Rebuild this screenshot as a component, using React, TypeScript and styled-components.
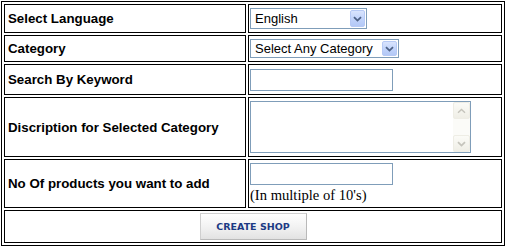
import React from "react";
import styled, { createGlobalStyle } from "styled-components";

const Global = createGlobalStyle`
  html, body { margin: 0; padding: 0; background: #fff; }
  body { margin: 1px; font-family: "Liberation Sans", Arial, sans-serif; color: #000; }
`;

const FormTable = styled.div`
  display: grid;
  grid-template-columns: 242px 254px;
  grid-template-rows: 29px 27px 31px 60px 49px 33px;
  gap: 2px;
  padding: 2px;
  border: 1px solid #000;
  width: fit-content;
`;

const Cell = styled.div<{ $span?: boolean }>`
  box-sizing: border-box;
  border: 1px solid #000;
  display: flex;
  align-items: center;
  grid-column: ${(p) => (p.$span ? "1 / span 2" : "auto")};
  justify-content: ${(p) => (p.$span ? "center" : "flex-start")};
`;

const LabelCell = styled(Cell)`
  padding: 0 3px;
  font-weight: bold;
  font-size: 13.3px;
`;

const FieldCell = styled(Cell)<{ $stack?: boolean }>`
  padding: 0 1px;
  flex-direction: ${(p) => (p.$stack ? "column" : "row")};
  align-items: ${(p) => (p.$stack ? "flex-start" : "center")};
  justify-content: ${(p) => (p.$stack ? "center" : "flex-start")};
`;

const SelectBox = styled.div<{ $w: number; $h: number }>`
  box-sizing: border-box;
  width: ${(p) => p.$w}px;
  height: ${(p) => p.$h}px;
  border: 1px solid #7f9db9;
  display: flex;
  align-items: stretch;
  padding: 1px;
  font-size: 13px;
`;

const SelectValue = styled.span`
  flex: 1;
  display: flex;
  align-items: center;
  padding-left: 3px;
  white-space: nowrap;
  overflow: hidden;
`;

const ArrowButton = styled.span`
  box-sizing: border-box;
  width: 15px;
  display: flex;
  align-items: center;
  justify-content: center;
  border: 1px solid #b6c9f5;
  border-radius: 2px;
  background: linear-gradient(180deg, #d9e4fd 0%, #c2d4fb 50%, #b3c8f6 100%);
`;

const TextInput = styled.input`
  box-sizing: border-box;
  width: 143px;
  height: 22px;
  border: 1px solid #7f9db9;
  margin: 0;
  padding: 0 2px;
  outline: none;
  background: #fff;
`;

const TextAreaBox = styled.div`
  box-sizing: border-box;
  width: 221px;
  height: 52px;
  border: 1px solid #7f9db9;
  display: flex;
`;

const TextArea = styled.textarea`
  flex: 1;
  border: 0;
  margin: 0;
  padding: 2px;
  resize: none;
  outline: none;
  overflow: hidden;
`;

const ScrollTrack = styled.div`
  width: 17px;
  display: flex;
  flex-direction: column;
  justify-content: space-between;
  background: #fbfbf8;
`;

const ScrollButton = styled.span`
  box-sizing: border-box;
  width: 17px;
  height: 17px;
  display: flex;
  align-items: center;
  justify-content: center;
  border: 1px solid #eeede5;
  border-radius: 2px;
  background: linear-gradient(180deg, #fbfbf7 0%, #efeee6 100%);
`;

const Hint = styled.span`
  font-family: "Liberation Serif", "Times New Roman", serif;
  font-size: 14.6px;
  line-height: 18px;
  margin-top: 1px;
`;

const ShopButton = styled.button`
  box-sizing: border-box;
  width: 107px;
  height: 27px;
  margin: 0;
  border: 1px solid #cfcfcf;
  border-right-color: #b9b9b9;
  border-bottom-color: #b9b9b9;
  background: linear-gradient(180deg, #ffffff 0%, #f1f1f1 55%, #e2e2e2 100%);
  font-family: "DejaVu Sans", Verdana, sans-serif;
  font-weight: bold;
  font-size: 9.5px;
  color: #1c3a84;
  padding: 0;
`;

const Chevron = ({ color }: { color: string }) => (
  <svg width="9" height="6" viewBox="0 0 9 6">
    <path d="M1 1.2 L4.5 4.6 L8 1.2" fill="none" stroke={color} strokeWidth="1.8" />
  </svg>
);

const ChevronUp = ({ color }: { color: string }) => (
  <svg width="9" height="6" viewBox="0 0 9 6">
    <path d="M1 4.8 L4.5 1.4 L8 4.8" fill="none" stroke={color} strokeWidth="1.4" />
  </svg>
);

const Select = ({ value, w, h }: { value: string; w: number; h: number }) => (
  <SelectBox $w={w} $h={h}>
    <SelectValue>{value}</SelectValue>
    <ArrowButton>
      <Chevron color="#4d6185" />
    </ArrowButton>
  </SelectBox>
);

export default function App() {
  return (
    <>
      <Global />
      <FormTable>
        <LabelCell>Select Language</LabelCell>
        <FieldCell>
          <Select value="English" w={117} h={21} />
        </FieldCell>

        <LabelCell>Category</LabelCell>
        <FieldCell>
          <Select value="Select Any Category" w={149} h={19} />
        </FieldCell>

        <LabelCell>Search By Keyword</LabelCell>
        <FieldCell>
          <TextInput type="text" />
        </FieldCell>

        <LabelCell>Discription for Selected Category</LabelCell>
        <FieldCell>
          <TextAreaBox>
            <TextArea />
            <ScrollTrack>
              <ScrollButton>
                <ChevronUp color="#c5c4bc" />
              </ScrollButton>
              <ScrollButton>
                <Chevron color="#c5c4bc" />
              </ScrollButton>
            </ScrollTrack>
          </TextAreaBox>
        </FieldCell>

        <LabelCell>No Of products you want to add</LabelCell>
        <FieldCell $stack>
          <TextInput type="text" />
          <Hint>(In multiple of 10's)</Hint>
        </FieldCell>

        <Cell $span>
          <ShopButton type="button">CREATE SHOP</ShopButton>
        </Cell>
      </FormTable>
    </>
  );
}
